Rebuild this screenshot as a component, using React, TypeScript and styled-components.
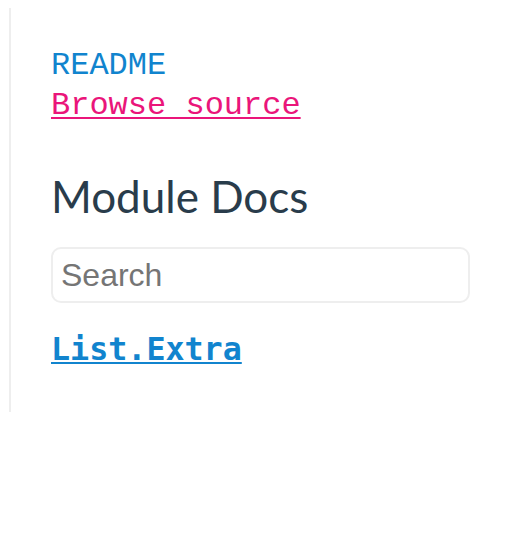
import React from "react";
import styled, { createGlobalStyle } from "styled-components";

const Global = createGlobalStyle`
  html, body { margin: 0; padding: 0; background: #fff; }
  body { font-family: "Lato", sans-serif; }
`;

const Page = styled.div`
  padding: 8px 0 0 9px;
`;

const Nav = styled.nav`
  border-left: 2px solid #eeeeee;
  padding: 38px 0 43px 40px;
  width: 419px;
`;

const NavLink = styled.a<{ $color: string; $underline?: boolean }>`
  display: block;
  font-family: "Liberation Mono", monospace;
  font-size: 32px;
  line-height: 40px;
  color: ${(p) => p.$color};
  text-decoration: ${(p) => (p.$underline ? "underline" : "none")};
  text-decoration-thickness: 2px;
  text-underline-offset: 3px;
`;

const Heading = styled.h2`
  margin: 42px 0 23px;
  font-family: "Lato", sans-serif;
  font-weight: 400;
  font-size: 44px;
  line-height: 56px;
  color: #293c4b;
`;

const SearchInput = styled.input`
  display: block;
  box-sizing: border-box;
  width: 419px;
  height: 56px;
  border: 2px solid #eeeeee;
  border-radius: 10px;
  padding: 0 8px;
  font-family: "Liberation Sans", Arial, sans-serif;
  font-size: 32px;
  outline: none;
  &::placeholder { color: #757575; }
`;

const ModuleList = styled.ul`
  list-style: none;
  margin: 26px 0 0;
  padding: 0;
`;

const ModuleLink = styled.a`
  font-family: "DejaVu Sans Mono", monospace;
  font-weight: bold;
  font-size: 31.7px;
  line-height: 40px;
  color: #1184ce;
  text-decoration: underline;
  text-decoration-thickness: 2px;
  text-underline-offset: 2px;
`;

export default function App() {
  return (
    <>
      <Global />
      <Page>
        <Nav>
          <NavLink $color="#1184ce" href="#">README</NavLink>
          <NavLink $color="#ea157a" $underline href="#">Browse source</NavLink>
          <Heading>Module Docs</Heading>
          <SearchInput placeholder="Search" />
          <ModuleList>
            <li>
              <ModuleLink href="#">List.Extra</ModuleLink>
            </li>
          </ModuleList>
        </Nav>
      </Page>
    </>
  );
}
